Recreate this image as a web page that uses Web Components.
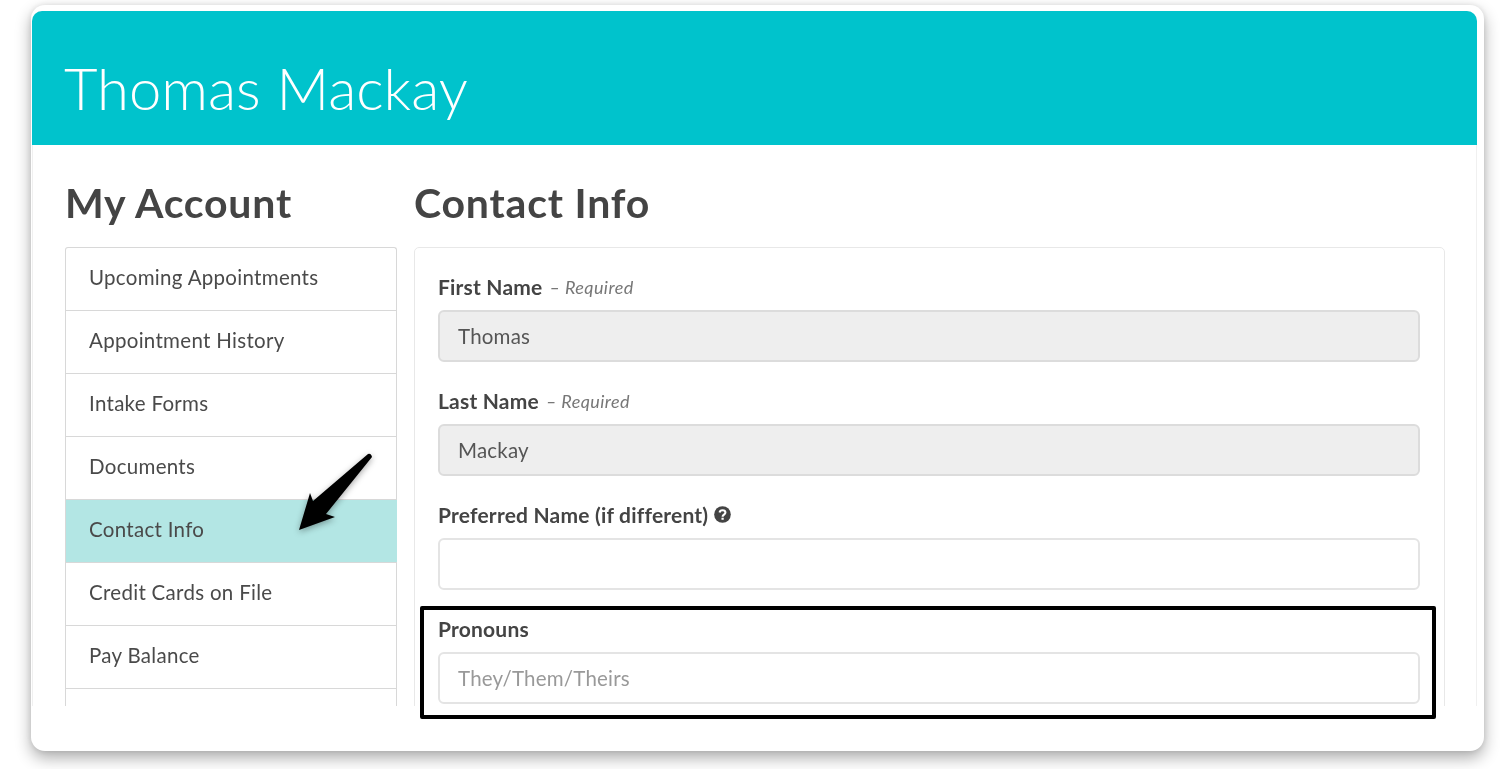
<!DOCTYPE html>
<html lang="en"><head><meta charset="utf-8"><title>Contact Info</title>
<style>
html,body{margin:0;padding:0;background:#fff;height:769px;overflow:hidden}
body{font-family:Lato,"Open Sans",sans-serif;color:#4a4a4a}
</style></head><body>
<account-card>
  <profile-banner slot="banner">Thomas Mackay</profile-banner>
  <side-nav slot="side" title-text="My Account">
    <nav-item>Upcoming Appointments</nav-item>
    <nav-item>Appointment History</nav-item>
    <nav-item>Intake Forms</nav-item>
    <nav-item>Documents</nav-item>
    <nav-item active>Contact Info</nav-item>
    <nav-item>Credit Cards on File</nav-item>
    <nav-item>Pay Balance</nav-item>
    <nav-item></nav-item>
  </side-nav>
  <form-panel slot="main" title-text="Contact Info">
    <form-field label="First Name" required value="Thomas" disabled></form-field>
    <form-field label="Last Name" required value="Mackay" disabled></form-field>
    <form-field label="Preferred Name (if different)" help></form-field>
    <form-field label="Pronouns" placeholder="They/Them/Theirs"></form-field>
  </form-panel>
</account-card>
<script>
function def(name, html){
  customElements.define(name, class extends HTMLElement{
    constructor(){super();this.attachShadow({mode:'open'}).innerHTML=typeof html==='function'?html(this):html;}
  });
}
def('account-card',`<style>
:host{display:block;position:relative;box-sizing:border-box;width:1453px;height:746px;margin:5px 0 0 31px;padding:6px 7px 45px 1px;background:#fff;border-radius:14px;box-shadow:0 7px 16px rgba(0,0,0,.32),0 0 6px rgba(0,0,0,.1);filter:blur(.45px)}
.frame{height:695px;overflow:hidden;border-radius:10px 10px 0 0;box-shadow:inset 1px 0 0 #f0f0f0,inset -1px 0 0 #f0f0f0}
.cols{display:flex;gap:17px;padding:0 32px 0 33px}
.arrow{position:absolute;left:260px;top:445px;width:90px;height:90px;overflow:visible;filter:drop-shadow(0 2px 3px rgba(0,0,0,.35))}
.mark{position:absolute;left:389px;top:601px;width:1016px;height:113px;box-sizing:border-box;border:4px solid #000;border-radius:2px;pointer-events:none}
</style>
<div class="frame"><slot name="banner"></slot><div class="cols"><slot name="side"></slot><slot name="main"></slot></div></div>
<svg class="arrow" viewBox="0 0 90 90"><path d="M77 4Q80 3 81 7L35 64 44 67 8 80 19 43 22 51Z" fill="#000"/></svg>
<div class="mark"></div>`);
def('profile-banner',`<style>
:host{display:flex;align-items:center;box-sizing:border-box;height:134px;padding:20px 0 0 32px;background:#00c3cc;color:#fff;font:300 58px/1 Lato,sans-serif}
</style><slot></slot>`);
const h2=`font:700 41px/1 Lato,sans-serif;letter-spacing:.8px;color:#444;margin:0;height:102px;box-sizing:border-box;padding-top:37px`;
def('side-nav',el=>`<style>
:host{display:block;flex:0 0 332px}
h2{${h2}}
.list{border:1px solid #d8d8d8;border-bottom:0;border-radius:3px 3px 0 0}
</style><h2>${el.getAttribute('title-text')}</h2><div class="list"><slot></slot></div>`);
def('nav-item',`<style>
:host{display:flex;align-items:center;box-sizing:border-box;height:63px;padding:0 23px 4px;font:400 20.5px/1 Lato,sans-serif;color:#4a4a4a;border-bottom:1px solid #d8d8d8;letter-spacing:.3px}
:host([active]){background:#b3e6e4;margin-right:-1px}
</style><slot></slot>`);
def('form-panel',el=>`<style>
:host{display:block;flex:0 0 1031px}
h2{${h2}}
.box{border:1px solid #e8e8e8;border-radius:5px;padding:20px 24px 0 23px;height:600px;box-sizing:border-box}
</style><h2>${el.getAttribute('title-text')}</h2><div class="box"><slot></slot></div>`);
def('form-field',el=>{
  const a=n=>el.getAttribute(n);
  const req=el.hasAttribute('required')?`<i>– Required</i>`:'';
  const help=el.hasAttribute('help')?`<svg viewBox="0 0 18 18" width="17" height="17" aria-hidden="true"><circle cx="9" cy="9" r="8.800" fill="#444"/><path d="M5.900 6.900C6.200 5.200 7.500 4.500 9 4.500c1.800 0 3.100 1 3.100 2.500 0 2.200-3 2.100-3 4.300" fill="none" stroke="#fff" stroke-width="2.200"/><rect x="7.900" y="12.400" width="2.400" height="2.200" fill="#fff"/></svg>`:'';
  const dis=el.hasAttribute('disabled');
  return `<style>
:host{display:block;height:114px}
label{display:flex;align-items:center;gap:6px;height:42px;padding-bottom:5px;box-sizing:border-box;font:700 21px/1 Lato,sans-serif;letter-spacing:.2px;color:#444}
i{font:italic 400 18px/1 Lato,sans-serif;letter-spacing:.4px;color:#777;margin-left:1px}
svg{display:block}
.in{box-sizing:border-box;height:52px;width:100%;border:2px solid #e4e4e4;border-radius:6px;padding:0 18px;display:flex;align-items:center;font:400 20.5px/1 Lato,sans-serif;color:#555;letter-spacing:.2px}
.in.d{background:#eee;border-color:#dcdcdc}
.ph{color:#999}
</style><label><span>${a('label')}</span>${req}${help}</label><div class="in${dis?' d':''}"><span class="${a('placeholder')?'ph':''}">${a('value')||a('placeholder')||''}</span></div>`;
});
</script>
</body></html>
